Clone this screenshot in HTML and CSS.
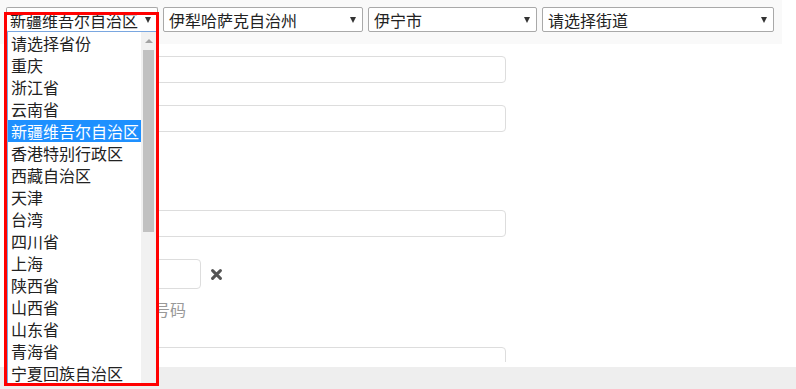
FILE: index.html
```html
<!DOCTYPE html>
<html lang="zh-CN">
<head>
    <meta charset="UTF-8">
    <meta name="viewport" content="width=device-width, initial-scale=1.0">
    <title>收货地址</title>
    <link rel="stylesheet" href="styles.css">
</head>
<body>
    <div class="page">
        <div class="region-bar">
            <div class="picker picker-prov">新疆维吾尔自治区<span class="caret"></span></div>
            <div class="picker picker-city">伊犁哈萨克自治州<span class="caret"></span></div>
            <div class="picker picker-area">伊宁市<span class="caret"></span></div>
            <div class="picker picker-street">请选择街道<span class="caret"></span></div>
        </div>

        <div class="form">
            <div class="row row-first"><input type="text" class="field"></div>
            <div class="row row-gap"><input type="text" class="field"></div>
            <div class="row row-wide-gap"><input type="text" class="field"></div>
            <div class="row row-gap">
                <input type="text" class="field field-short">
                <span class="clear-btn">
                    <svg width="11" height="11" viewBox="0 0 11 11">
                        <path d="M1.6 1.6 L9.4 9.4 M9.4 1.6 L1.6 9.4" stroke="#555" stroke-width="3" stroke-linecap="round"/>
                    </svg>
                </span>
            </div>
            <div class="hint">输入手机号码</div>
            <div class="row row-last"><input type="text" class="field"></div>
        </div>

        <div class="footer"></div>

        <!-- open province list -->
        <div class="dropdown">
            <ul class="options">
                <li>请选择省份</li>
                <li>重庆</li>
                <li>浙江省</li>
                <li>云南省</li>
                <li class="active">新疆维吾尔自治区</li>
                <li>香港特别行政区</li>
                <li>西藏自治区</li>
                <li>天津</li>
                <li>台湾</li>
                <li>四川省</li>
                <li>上海</li>
                <li>陕西省</li>
                <li>山西省</li>
                <li>山东省</li>
                <li>青海省</li>
                <li>宁夏回族自治区</li>
            </ul>
            <div class="scrollbar">
                <span class="scroll-up"></span>
                <span class="scroll-thumb"></span>
            </div>
        </div>

        <div class="mark"></div>
    </div>
</body>
</html>
```

FILE: styles.css
```css
body {
    margin: 0;
    font-family: "Noto Sans CJK SC", "Liberation Sans", sans-serif;
    font-size: 16px;
    color: #222;
    background-color: #fff;
}

.page {
    position: relative;
    width: 796px;
    height: 389px;
    overflow: hidden;
}

.region-bar {
    display: flex;
    box-sizing: border-box;
    width: 782px;
    height: 44px;
    padding: 7px 0 0 6px;
    background-color: #f9f9f9;
}

.picker {
    box-sizing: border-box;
    height: 25px;
    display: flex;
    align-items: center;
    justify-content: space-between;
    padding: 0 6px 0 3px;
    border: 1px solid #a9a9a9;
    border-radius: 2px;
    background-color: #fff;
    line-height: 22px;
    white-space: nowrap;
}

.picker-prov {
    width: 152px;
    border-bottom-color: #7aa7e0;
}

.picker-city {
    width: 200px;
    margin-left: 5px;
    padding-left: 5px;
}

.picker-area {
    width: 169px;
    margin-left: 5px;
    padding-left: 5px;
}

.picker-street {
    width: 232px;
    margin-left: 5px;
    padding-left: 5px;
}

.caret {
    width: 0;
    height: 0;
    border-left: 3px solid transparent;
    border-right: 3px solid transparent;
    border-top: 6px solid #333;
}

.form {
    height: 318px;
    overflow: hidden;
    padding-left: 90px;
}

.row {
    display: flex;
    align-items: center;
}

.row-first {
    margin-top: 12px;
}

.row-gap {
    margin-top: 22px;
}

.row-wide-gap {
    margin-top: 78px;
}

.row-last {
    margin-top: 27px;
}

.field {
    box-sizing: border-box;
    width: 416px;
    height: 27px;
    margin: 0;
    border: 1px solid #ddd;
    border-radius: 4px;
    background-color: #fff;
}

.field-short {
    width: 111px;
    height: 30px;
}

.clear-btn {
    display: flex;
    margin-left: 10px;
}

.hint {
    margin-top: 9px;
    height: 22px;
    line-height: 22px;
    color: #999;
}

.footer {
    margin-top: 5px;
    height: 22px;
    background-color: #eee;
}

.dropdown {
    position: absolute;
    left: 7px;
    top: 32px;
    width: 149px;
    height: 352px;
    display: flex;
    background-color: #fff;
    border-left: 1px solid #7aa7e0;
    box-sizing: border-box;
}

.options {
    list-style: none;
    margin: 0;
    padding: 0;
    width: 133px;
}

.options li {
    height: 22px;
    line-height: 22px;
    padding-left: 3px;
    white-space: nowrap;
}

.options li.active {
    background-color: #1e90ff;
    color: #fff;
}

.scrollbar {
    position: relative;
    width: 15px;
    background-color: #f1f1f1;
}

.scroll-up {
    position: absolute;
    left: 4px;
    top: 7px;
    width: 0;
    height: 0;
    border-left: 4px solid transparent;
    border-right: 4px solid transparent;
    border-bottom: 4px solid #a3a3a3;
}

.scroll-thumb {
    position: absolute;
    left: 2px;
    top: 18px;
    width: 11px;
    height: 182px;
    background-color: #c1c1c1;
}

.mark {
    position: absolute;
    left: 4px;
    top: 12px;
    width: 155px;
    height: 374px;
    box-sizing: border-box;
    border: 3px solid #f00;
}
```
